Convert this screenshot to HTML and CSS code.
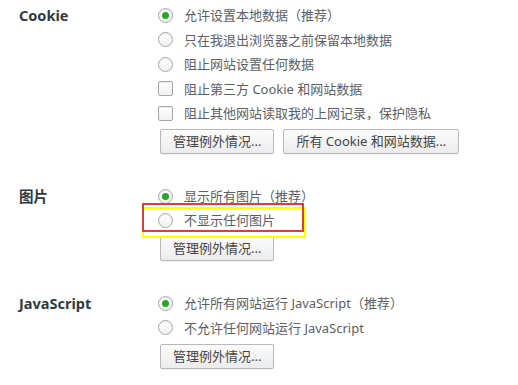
FILE: index.html
```html
<!DOCTYPE html>
<html lang="zh-CN">
<head>
<meta charset="utf-8">
<link rel="stylesheet" href="styles.css">
</head>
<body>
<div class="page">
  <section class="section">
    <div class="label">Cookie</div>
    <div class="controls">
      <div class="option"><span class="radio checked"></span><span class="text">允许设置本地数据（推荐）</span></div>
      <div class="option"><span class="radio"></span><span class="text">只在我退出浏览器之前保留本地数据</span></div>
      <div class="option"><span class="radio"></span><span class="text">阻止网站设置任何数据</span></div>
      <div class="option"><span class="checkbox"></span><span class="text">阻止第三方 Cookie 和网站数据</span></div>
      <div class="option"><span class="checkbox"></span><span class="text">阻止其他网站读取我的上网记录，保护隐私</span></div>
      <div class="buttons">
        <button class="btn">管理例外情况...</button>
        <button class="btn">所有 Cookie 和网站数据...</button>
      </div>
    </div>
  </section>
  <section class="section">
    <div class="label">图片</div>
    <div class="controls">
      <div class="option"><span class="radio checked"></span><span class="text">显示所有图片（推荐）</span></div>
      <div class="option"><span class="radio"></span><span class="text">不显示任何图片</span></div>
      <div class="buttons">
        <button class="btn">管理例外情况...</button>
      </div>
    </div>
  </section>
  <section class="section">
    <div class="label">JavaScript</div>
    <div class="controls">
      <div class="option"><span class="radio checked"></span><span class="text">允许所有网站运行 JavaScript（推荐）</span></div>
      <div class="option"><span class="radio"></span><span class="text">不允许任何网站运行 JavaScript</span></div>
      <div class="buttons">
        <button class="btn">管理例外情况...</button>
      </div>
    </div>
  </section>
  <div class="mark mark-yellow"></div>
  <div class="mark mark-red"></div>
</div>
</body>
</html>
```

FILE: styles.css
```css
html, body {
  margin: 0;
  padding: 0;
  background: #ffffff;
}

.page {
  position: relative;
  width: 518px;
  height: 385px;
  overflow: hidden;
  padding-top: 3px;
  box-sizing: border-box;
  font-family: "Segoe UI", "Noto Sans", "Noto Sans CJK SC", sans-serif;
  font-size: 13px;
  color: #5f6368;
}

.section {
  display: flex;
  padding-left: 19px;
  margin-bottom: 29.75px;
}

.label {
  width: 139px;
  flex: none;
  line-height: 24.5px;
  height: 24.5px;
  font-size: 14.5px;
  font-weight: bold;
  color: #303942;
}

.controls {
  display: flex;
  flex-direction: column;
}

.option {
  display: flex;
  align-items: center;
  height: 24.5px;
}

.text {
  line-height: 24.5px;
  color: #5c6066;
  white-space: nowrap;
}

.radio,
.checkbox {
  flex: none;
  width: 13px;
  height: 13px;
  margin-right: 11px;
  border: 1px solid #a6a6a6;
  background: linear-gradient(#ffffff, #f0f0f0);
  box-shadow: inset 0 1px 1px rgba(0,0,0,0.08);
  position: relative;
}

.radio {
  border-radius: 50%;
}

.checkbox {
  border-radius: 2px;
}

.radio.checked::after {
  content: "";
  position: absolute;
  left: 3px;
  top: 3px;
  width: 7px;
  height: 7px;
  border-radius: 50%;
  background: #2aa52a;
}

.buttons {
  display: flex;
  gap: 9px;
  margin-top: 3.5px;
  margin-left: 2px;
}

.btn {
  height: 25px;
  padding: 0 12px;
  border: 1px solid #b9b9b9;
  border-radius: 2px;
  background: linear-gradient(#fbfbfb, #ececec);
  box-shadow: 0 1px 0 rgba(0,0,0,0.05);
  font-family: "Segoe UI", "Noto Sans", "Noto Sans CJK SC", sans-serif;
  font-size: 13px;
  color: #444444;
  line-height: 23px;
}

.mark {
  position: absolute;
  box-sizing: border-box;
  border-style: solid;
  border-width: 2px;
}

.mark-yellow {
  left: 142px;
  top: 207px;
  width: 164px;
  height: 31px;
  border-color: #ffff00;
}

.mark-red {
  left: 142px;
  top: 203px;
  width: 162px;
  height: 29px;
  border-color: #e8383d;
}
```
